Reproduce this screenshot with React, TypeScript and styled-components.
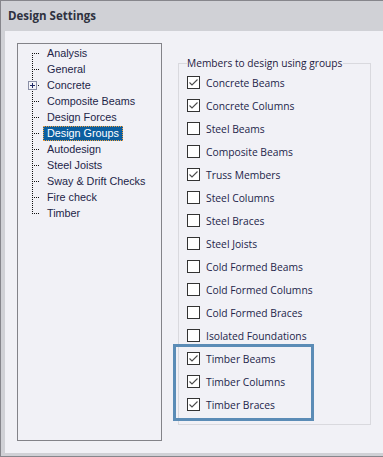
import React from 'react';
import styled, { createGlobalStyle } from 'styled-components';

const GlobalStyle = createGlobalStyle`
  html, body {
    margin: 0;
    padding: 0;
    background: #f1f1f6;
  }
  * {
    box-sizing: border-box;
  }
`;

const Window = styled.div`
  width: 383px;
  height: 457px;
  display: flex;
  flex-direction: column;
  border-top: 1px solid #86868c;
  border-left: 1px solid #86868c;
  border-bottom: 1px solid #86868c;
  background: #d0d1d6;
  font-family: 'Open Sans', 'Liberation Sans', sans-serif;
`;

const TitleBar = styled.div`
  height: 30px;
  flex: none;
  display: flex;
  align-items: center;
  padding: 0 0 1px 7px;
  font-size: 11.5px;
  font-weight: 700;
  color: #2e3140;
`;

const Panel = styled.div`
  flex: 1;
  margin: 0 0 3px 4px;
  background: #f1f1f6;
  display: flex;
  align-items: flex-start;
  padding: 12px 0 0 12px;
`;

const TreeBox = styled.div`
  width: 145px;
  height: 398px;
  flex: none;
  border: 1px solid #838389;
  padding: 1px 0 0 0;
`;

const TreeList = styled.div`
  position: relative;
  padding-left: 10px;
`;

const TreeRow = styled.div<{ $first?: boolean; $last?: boolean }>`
  position: relative;
  height: 16px;
  display: flex;
  align-items: center;
  padding-left: 15px;
  font-family: 'Liberation Sans', sans-serif;
  font-size: 10.8px;
  color: #232548;

  &::before {
    content: '';
    position: absolute;
    left: 4px;
    top: 8px;
    width: 8px;
    height: 1px;
    background: repeating-linear-gradient(90deg, #111 0 1px, transparent 1px 2px);
  }

  &::after {
    content: '';
    position: absolute;
    left: 4px;
    top: ${(p) => (p.$first ? '8px' : '0')};
    height: ${(p) => (p.$first || p.$last ? '9px' : '16px')};
    width: 1px;
    background: repeating-linear-gradient(180deg, #111 0 1px, transparent 1px 2px);
  }
`;

const Expander = styled.span`
  position: absolute;
  left: 0;
  top: 4px;
  width: 9px;
  height: 9px;
  border: 1px solid #8a8fa6;
  background: #f4f4f8;
  z-index: 1;

  &::before {
    content: '';
    position: absolute;
    left: 1px;
    top: 3px;
    width: 5px;
    height: 1px;
    background: #1f2a66;
  }

  &::after {
    content: '';
    position: absolute;
    left: 3px;
    top: 1px;
    width: 1px;
    height: 5px;
    background: #1f2a66;
  }
`;

const TreeLabel = styled.span<{ $selected?: boolean }>`
  display: inline-flex;
  align-items: center;
  height: 15px;
  padding: 0 3px;
  white-space: nowrap;
  border: 1px dotted ${(p) => (p.$selected ? '#f0a040' : 'transparent')};
  background: ${(p) => (p.$selected ? '#0b5e9f' : 'transparent')};
  color: ${(p) => (p.$selected ? '#ffffff' : 'inherit')};
`;

const RightSide = styled.div`
  margin-left: 16px;
  padding-top: 13px;
  position: relative;
`;

const GroupBox = styled.fieldset`
  width: 193px;
  height: 369px;
  margin: 0;
  padding: 0 0 0 8px;
  border: 1px solid #d9d9de;
  position: relative;
`;

const Legend = styled.legend`
  padding: 0 1px 0 0;
  margin-left: 0;
  font-size: 10.2px;
  color: #1f2142;
  line-height: 14px;
`;

const Rows = styled.div`
  display: flex;
  flex-direction: column;
  padding-top: 1px;
`;

const Row = styled.label`
  height: 23px;
  display: flex;
  align-items: center;
  gap: 6px;
  font-size: 10.3px;
  color: #23254a;
  white-space: nowrap;
`;

const Box = styled.span`
  width: 13px;
  height: 13px;
  flex: none;
  border: 1px solid #333333;
  background: #ffffff;
  display: flex;
  align-items: center;
  justify-content: center;
`;

const Highlight = styled.div`
  position: absolute;
  left: -5px;
  top: 301px;
  width: 141px;
  height: 77px;
  border: 3px solid #5b8cb6;
  pointer-events: none;
`;

const treeItems = [
  'Analysis',
  'General',
  'Concrete',
  'Composite Beams',
  'Design Forces',
  'Design Groups',
  'Autodesign',
  'Steel Joists',
  'Sway & Drift Checks',
  'Fire check',
  'Timber',
];

const members: [string, boolean][] = [
  ['Concrete Beams', true],
  ['Concrete Columns', true],
  ['Steel Beams', false],
  ['Composite Beams', false],
  ['Truss Members', true],
  ['Steel Columns', false],
  ['Steel Braces', false],
  ['Steel Joists', false],
  ['Cold Formed Beams', false],
  ['Cold Formed Columns', false],
  ['Cold Formed Braces', false],
  ['Isolated Foundations', false],
  ['Timber Beams', true],
  ['Timber Columns', true],
  ['Timber Braces', true],
];

const Check = () => (
  <svg width='11' height='11' viewBox='0 0 11 11'>
    <polyline points='1.5,5.5 4,8 9.5,2.5' fill='none' stroke='#4a4a4a' strokeWidth='1.1' />
  </svg>
);

const App = (): React.ReactElement => {
  return (
    <>
      <GlobalStyle />
      <Window>
        <TitleBar>Design Settings</TitleBar>
        <Panel>
          <TreeBox>
            <TreeList>
              {treeItems.map((item, i) => (
                <TreeRow key={item} $first={i === 0} $last={i === treeItems.length - 1}>
                  {item === 'Concrete' && <Expander />}
                  <TreeLabel $selected={item === 'Design Groups'}>{item}</TreeLabel>
                </TreeRow>
              ))}
            </TreeList>
          </TreeBox>
          <RightSide>
            <GroupBox>
              <Legend>Members to design using groups</Legend>
              <Rows>
                {members.map(([name, checked]) => (
                  <Row key={name}>
                    <Box>{checked && <Check />}</Box>
                    {name}
                  </Row>
                ))}
              </Rows>
            </GroupBox>
            <Highlight />
          </RightSide>
        </Panel>
      </Window>
    </>
  );
};

export default App;
